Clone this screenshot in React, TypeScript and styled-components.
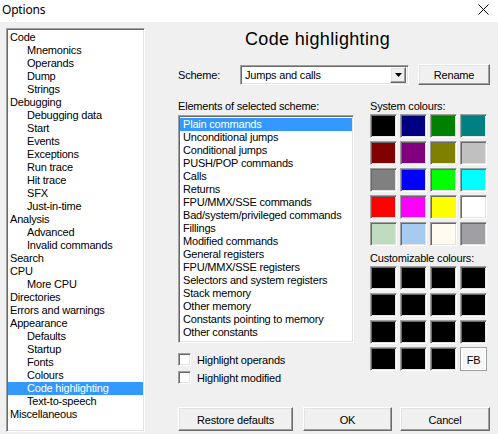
import React from "react";
import styled, { createGlobalStyle } from "styled-components";

const Global = createGlobalStyle`
  html, body { margin: 0; padding: 0; background: #f0f0f0; }
  body {
    font-family: "Liberation Sans", Arial, sans-serif;
    font-size: 11px;
    letter-spacing: -0.2px;
    color: #000;
  }
  #root { width: 498px; height: 434px; overflow: hidden; }
`;

const sunkenBorder = `
  border-style: solid;
  border-width: 1px;
  border-color: #a0a0a0 #ffffff #ffffff #a0a0a0;
  box-shadow: inset 1px 1px 0 #696969, inset -1px -1px 0 #e3e3e3;
`;

const raisedBorder = `
  border-style: solid;
  border-width: 1px;
  border-color: #ffffff #696969 #696969 #ffffff;
  box-shadow: inset -1px -1px 0 #a0a0a0, inset 1px 1px 0 #e3e3e3;
`;

const Window = styled.div`
  width: 498px;
  height: 434px;
  display: flex;
  flex-direction: column;
  background: #f0f0f0;
`;

const TitleBar = styled.div`
  height: 22px;
  background: #ffffff;
  display: flex;
  align-items: flex-start;
  justify-content: space-between;
  box-sizing: border-box;
`;

const TitleText = styled.div`
  font-family: "Noto Sans", "Open Sans", sans-serif;
  font-size: 12px;
  letter-spacing: -0.2px;
  line-height: 19px;
  padding-left: 2px;
`;

const CloseBox = styled.div`
  width: 30px;
  height: 19px;
  display: flex;
  align-items: center;
  justify-content: center;
  margin-right: 0px;
`;

const Body = styled.div`
  display: flex;
  flex-direction: row;
  flex: 1;
`;

const Tree = styled.div`
  ${sunkenBorder}
  box-sizing: border-box;
  width: 139px;
  height: 404px;
  margin: 6px 0 0 6px;
  padding: 2px 1px 1px 1px;
  background: #ffffff;
  display: flex;
  flex-direction: column;
`;

const TreeItem = styled.div<{ $indent: number; $selected?: boolean }>`
  height: 13px;
  line-height: 13px;
  white-space: nowrap;
  padding-left: ${(p) => 2 + p.$indent * 17}px;
  background: ${(p) => (p.$selected ? "#3399ff" : "transparent")};
  color: ${(p) => (p.$selected ? "#ffffff" : "#000000")};
`;

const Panel = styled.div`
  width: 345px;
  display: flex;
  flex-direction: column;
`;

const Heading = styled.div`
  margin-top: 7px;
  height: 21px;
  line-height: 21px;
  font-size: 18px;
  letter-spacing: 0.35px;
  text-align: center;
`;

const SchemeRow = styled.div`
  margin-top: 14px;
  height: 21px;
  padding-left: 33px;
  display: flex;
  align-items: center;
`;

const SchemeLabel = styled.div`
  width: 62px;
`;

const Combo = styled.div`
  ${sunkenBorder}
  box-sizing: border-box;
  width: 169px;
  height: 20px;
  background: #ffffff;
  display: flex;
  align-items: center;
  padding: 2px;
`;

const ComboText = styled.div`
  flex: 1;
  padding-left: 2px;
  line-height: 14px;
`;

const ComboButton = styled.div`
  ${raisedBorder}
  box-sizing: border-box;
  width: 16px;
  height: 16px;
  background: #f0f0f0;
  display: flex;
  align-items: center;
  justify-content: center;
`;

const Button = styled.div<{ $w: number; $h?: number; $ml?: number }>`
  ${raisedBorder}
  box-sizing: border-box;
  width: ${(p) => p.$w}px;
  height: ${(p) => p.$h ?? 24}px;
  margin-left: ${(p) => p.$ml ?? 0}px;
  background: #f0f0f0;
  display: flex;
  align-items: center;
  justify-content: center;
  padding-top: 1px;
`;

const Middle = styled.div`
  margin-top: 15px;
  padding-left: 33px;
  display: flex;
  gap: 16px;
  height: 284px;
`;

const Column = styled.div<{ $w: number }>`
  width: ${(p) => p.$w}px;
  display: flex;
  flex-direction: column;
`;

const Label = styled.div<{ $mt?: number }>`
  height: 13px;
  line-height: 13px;
  margin-top: ${(p) => p.$mt ?? 0}px;
  white-space: nowrap;
`;

const ListBox = styled.div`
  ${sunkenBorder}
  box-sizing: border-box;
  margin-top: 2px;
  height: 228px;
  padding: 2px 1px 1px 1px;
  background: #ffffff;
  display: flex;
  flex-direction: column;
`;

const ListItem = styled.div<{ $selected?: boolean }>`
  height: 13px;
  line-height: 13px;
  padding-left: 3px;
  white-space: nowrap;
  background: ${(p) => (p.$selected ? "#3399ff" : "transparent")};
  color: ${(p) => (p.$selected ? "#ffffff" : "#000000")};
`;

const CheckRow = styled.div<{ $mt: number }>`
  margin-top: ${(p) => p.$mt}px;
  height: 13px;
  display: flex;
  align-items: center;
  gap: 6px;
`;

const CheckBox = styled.div`
  ${sunkenBorder}
  box-sizing: border-box;
  width: 13px;
  height: 13px;
  background: #ffffff;
`;

const SwatchGrid = styled.div<{ $mt: number }>`
  margin-top: ${(p) => p.$mt}px;
  display: grid;
  grid-template-columns: repeat(4, 27px);
  grid-auto-rows: 24px;
  column-gap: 3px;
  row-gap: 3px;
`;

const Swatch = styled.div`
  ${sunkenBorder}
  box-sizing: border-box;
`;

const FbButton = styled.div`
  box-sizing: border-box;
  border: 1px solid #a0a0a0;
  box-shadow: inset 1px 1px 0 #ffffff, inset -1px -1px 0 #ffffff;
  background: #f7f7f7;
  display: flex;
  align-items: flex-end;
  justify-content: center;
  padding-bottom: 3px;
  line-height: 13px;
`;

const ButtonRow = styled.div`
  margin-top: 23px;
  padding-left: 33px;
  display: flex;
`;

const treeItems: [string, number][] = [
  ["Code", 0],
  ["Mnemonics", 1],
  ["Operands", 1],
  ["Dump", 1],
  ["Strings", 1],
  ["Debugging", 0],
  ["Debugging data", 1],
  ["Start", 1],
  ["Events", 1],
  ["Exceptions", 1],
  ["Run trace", 1],
  ["Hit trace", 1],
  ["SFX", 1],
  ["Just-in-time", 1],
  ["Analysis", 0],
  ["Advanced", 1],
  ["Invalid commands", 1],
  ["Search", 0],
  ["CPU", 0],
  ["More CPU", 1],
  ["Directories", 0],
  ["Errors and warnings", 0],
  ["Appearance", 0],
  ["Defaults", 1],
  ["Startup", 1],
  ["Fonts", 1],
  ["Colours", 1],
  ["Code highlighting", 1],
  ["Text-to-speech", 1],
  ["Miscellaneous", 0],
];

const elements = [
  "Plain commands",
  "Unconditional jumps",
  "Conditional jumps",
  "PUSH/POP commands",
  "Calls",
  "Returns",
  "FPU/MMX/SSE commands",
  "Bad/system/privileged commands",
  "Fillings",
  "Modified commands",
  "General registers",
  "FPU/MMX/SSE registers",
  "Selectors and system registers",
  "Stack memory",
  "Other memory",
  "Constants pointing to memory",
  "Other constants",
];

const systemColours = [
  "#000000", "#000080", "#008000", "#008080",
  "#800000", "#800080", "#808000", "#c0c0c0",
  "#808080", "#0000ff", "#00ff00", "#00ffff",
  "#ff0000", "#ff00ff", "#ffff00", "#ffffff",
  "#c0dcc0", "#a6caf0", "#fffbf0", "#a0a0a4",
];

export default function App() {
  return (
    <>
      <Global />
      <Window>
        <TitleBar>
          <TitleText>Options</TitleText>
          <CloseBox>
            <svg width="11" height="11" viewBox="0 0 11 11">
              <path d="M0.5 0.5 L10.5 10.5 M10.5 0.5 L0.5 10.5" stroke="#000" strokeWidth="1" />
            </svg>
          </CloseBox>
        </TitleBar>
        <Body>
          <Tree>
            {treeItems.map(([t, ind]) => (
              <TreeItem key={t} $indent={ind} $selected={t === "Code highlighting"}>
                {t}
              </TreeItem>
            ))}
          </Tree>
          <Panel>
            <Heading>Code highlighting</Heading>
            <SchemeRow>
              <SchemeLabel>Scheme:</SchemeLabel>
              <Combo>
                <ComboText>Jumps and calls</ComboText>
                <ComboButton>
                  <svg width="7" height="4" viewBox="0 0 7 4">
                    <path d="M0 0 H7 L3.5 4 Z" fill="#000" />
                  </svg>
                </ComboButton>
              </Combo>
              <Button $w={72} $h={21} $ml={9}>Rename</Button>
            </SchemeRow>
            <Middle>
              <Column $w={176}>
                <Label>Elements of selected scheme:</Label>
                <ListBox>
                  {elements.map((e, i) => (
                    <ListItem key={e} $selected={i === 0}>{e}</ListItem>
                  ))}
                </ListBox>
                <CheckRow $mt={10}>
                  <CheckBox />
                  <span>Highlight operands</span>
                </CheckRow>
                <CheckRow $mt={5}>
                  <CheckBox />
                  <span>Highlight modified</span>
                </CheckRow>
              </Column>
              <Column $w={117}>
                <Label>System colours:</Label>
                <SwatchGrid $mt={1}>
                  {systemColours.map((c, i) => (
                    <Swatch key={i} style={{ background: c }} />
                  ))}
                </SwatchGrid>
                <Label $mt={6}>Customizable colours:</Label>
                <SwatchGrid $mt={1}>
                  {Array.from({ length: 15 }).map((_, i) => (
                    <Swatch key={i} style={{ background: "#000000" }} />
                  ))}
                  <FbButton>FB</FbButton>
                </SwatchGrid>
              </Column>
            </Middle>
            <ButtonRow>
              <Button $w={115}>Restore defaults</Button>
              <Button $w={89} $ml={10}>OK</Button>
              <Button $w={90} $ml={8}>Cancel</Button>
            </ButtonRow>
          </Panel>
        </Body>
      </Window>
    </>
  );
}
